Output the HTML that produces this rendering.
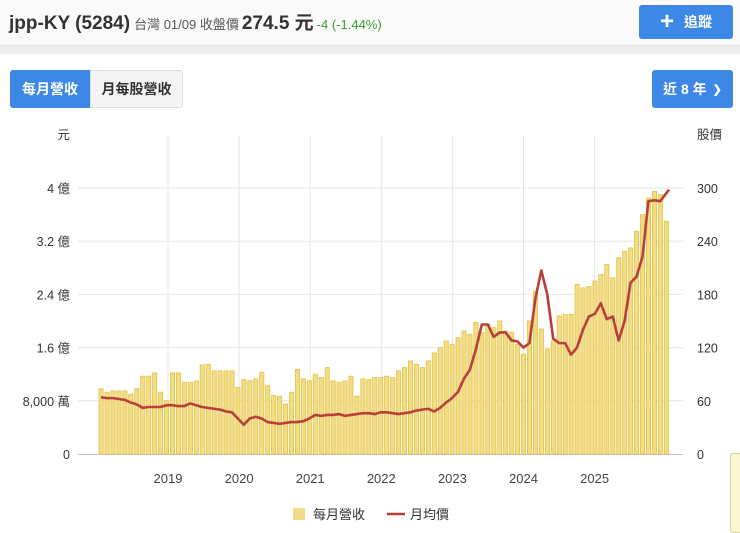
<!DOCTYPE html>
<html><head><meta charset="utf-8"><style>
*{margin:0;padding:0;box-sizing:border-box}
body{width:740px;height:529px;overflow:hidden;background:#fff;font-family:"Liberation Sans","Noto Sans CJK TC",sans-serif;position:relative}
.hdr{position:absolute;left:0;top:0;width:740px;height:46px;background:#fafafa;border-bottom:1px solid #e2e2e2}
.band{position:absolute;left:0;top:46px;width:740px;height:8px;background:#efefef}
.title{position:absolute;left:9px;top:8px;font-size:19px;color:#333;white-space:nowrap}
.title .n{font-weight:bold}
.title .s{font-size:13px;color:#555;margin-left:4px}
.title .p{font-size:19px;font-weight:bold;color:#333;margin-left:3px}
.title .c{font-size:13px;color:#3e9a35;margin-left:3px}
.btn{position:absolute;background:#3d87e6;color:#fff;border-radius:3px;font-weight:bold;font-size:14px;display:flex;align-items:center;justify-content:center}
.tab2{position:absolute;left:90px;top:70px;width:93px;height:38px;background:#f4f4f4;border:1px solid #ddd;border-radius:0 3px 3px 0;font-size:14px;font-weight:bold;color:#333;display:flex;align-items:center;justify-content:center}
svg{position:absolute;left:0;top:0}
</style></head><body>
<div class="hdr"></div><div class="band"></div>
<div class="title"><span class="n">jpp-KY (5284)</span><span class="s">台灣 01/09 收盤價</span><span class="p">274.5 元</span><span class="c">-4 (-1.44%)</span></div>
<div class="btn" style="left:639px;top:5px;width:94px;height:34px;font-size:14px"><span style="font-size:24px;margin-right:10px;line-height:1">+</span>追蹤</div>
<div class="btn" style="left:10px;top:70px;width:80px;height:38px;border-radius:3px 0 0 3px">每月營收</div>
<div class="tab2">月每股營收</div>
<div class="btn" style="left:652px;top:70px;width:81px;height:38px">近 8 年 <span style="margin-left:6px;font-size:11px">&#10095;</span></div>
<svg id="ch" width="740" height="529"></svg>
<div style="position:absolute;left:730px;top:453px;width:14px;height:80px;background:#fbf7d4;border:1px solid #d9d29a;border-radius:3px"></div>
<script>
var rev=[.98,.93,.95,.95,.95,.9,.98,1.17,1.17,1.22,.93,.8,
1.22,1.22,1.08,1.08,1.1,1.34,1.35,1.25,1.25,1.25,1.25,1.0,
1.12,1.1,1.13,1.23,1.03,.88,.87,.75,.93,1.27,1.13,1.1,
1.2,1.15,1.3,1.1,1.08,1.1,1.17,.87,1.13,1.12,1.15,1.15,
1.17,1.15,1.25,1.3,1.4,1.35,1.3,1.4,1.52,1.6,1.7,1.65,
1.75,1.85,1.8,1.98,1.83,1.95,1.9,2.0,1.85,1.83,1.65,1.5,
2.0,2.45,1.88,1.58,1.7,2.08,2.1,2.1,2.55,2.5,2.52,2.6,
2.7,2.85,2.65,2.95,3.05,3.1,3.35,3.6,3.85,3.95,3.9,3.5];
var pr=[64,63,63,62,61,58,56,52,53,53,53,
55,55,54,54,57,55,53,52,51,50,48,47,
40,33,40,42,40,36,35,34,35,36,36,37,
40,44,43,44,44,45,43,44,45,46,46,45,
47,47,46,45,46,47,49,50,51,48,52,58,
63,70,85,95,118,146,146,132,137,137,128,127,
120,125,175,207,180,130,125,125,112,120,140,155,
158,170,152,155,128,150,193,200,222,285,286,285,298];
var s='';
for(var i=0;i<5;i++){var y=188+i*53.2;s+='<line x1="78" x2="683" y1="'+y+'" y2="'+y+'" stroke="#e6e6e6"/>';}
var yrs=['2019','2020','2021','2022','2023','2024','2025'];
for(var i=0;i<7;i++){var x=168+i*71.1;s+='<line x1="'+x+'" x2="'+x+'" y1="135" y2="454" stroke="#e6e6e6"/><text x="'+x+'" y="483" text-anchor="middle" font-size="13" fill="#444">'+yrs[i]+'</text>';}
s+='<line x1="78" x2="683" y1="454.5" y2="454.5" stroke="#cdbac8"/>';
var ll=['0','8,000 萬','1.6 億','2.4 億','3.2 億','4 億'],rl=['0','60','120','180','240','300'];
for(var i=0;i<6;i++){var y=454-i*53.2+5;s+='<text x="70" y="'+y+'" text-anchor="end" font-size="12.5" fill="#333">'+ll[i]+'</text><text x="697" y="'+y+'" font-size="12.5" fill="#333">'+rl[i]+'</text>';}
s+='<text x="70" y="139" text-anchor="end" font-size="12.5" fill="#333">元</text><text x="697" y="139" font-size="12.5" fill="#333">股價</text>';
var cx=function(i){return 101+i*5.95;};
for(var i=0;i<rev.length;i++){var h=rev[i]*66.5;s+='<rect x="'+(cx(i)-2)+'" y="'+(454-h)+'" width="4.2" height="'+h+'" fill="#f2dd85" stroke="#e3c347" stroke-width="0.8"/>';}
var pts=[];for(var i=0;i<pr.length;i++){pts.push((i==pr.length-1?669:cx(i))+','+(454-pr[i]*0.887));}
s+='<polyline points="'+pts.join(' ')+'" fill="none" stroke="#b9403a" stroke-width="2.6" stroke-linejoin="round"/>';
s+='<rect x="293" y="508" width="12" height="12" fill="#f0dc8a"/><text x="313" y="519" font-size="13" fill="#333">每月營收</text>';
s+='<line x1="387" x2="405" y1="514" y2="514" stroke="#b9403a" stroke-width="2.6"/><text x="410" y="519" font-size="13" fill="#333">月均價</text>';
document.getElementById('ch').innerHTML=s;
</script>
</body></html>
